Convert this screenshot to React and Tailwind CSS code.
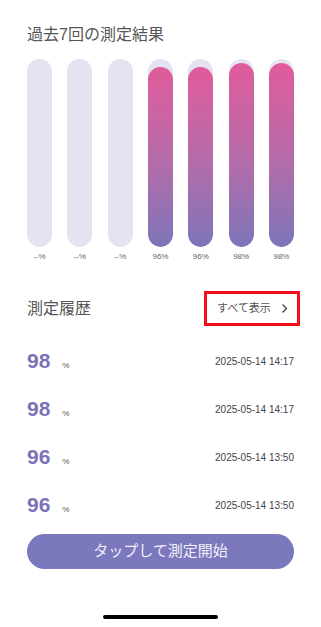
import React from 'react';

const FONT = { fontFamily: '"Liberation Sans", "Noto Sans CJK JP", sans-serif' };

// last 7 results, null = no data
const results = [null, null, null, 96, 96, 98, 98];

const history = [
  { value: 98, date: '2025-05-14 14:17' },
  { value: 98, date: '2025-05-14 14:17' },
  { value: 96, date: '2025-05-14 13:50' },
  { value: 96, date: '2025-05-14 13:50' },
];

export default function App() {
  return (
    <div className="w-[321px] h-[627px] bg-white flex flex-col px-[27px] pt-[24px]" style={FONT}>
      <div className="text-[16px] leading-[22px] text-[#555]">過去7回の測定結果</div>

      {/* bar chart */}
      <div className="mt-[13px] flex justify-between">
        {results.map((v, i) => (
          <div key={i} className="w-[25px] flex flex-col items-center">
            <div className="w-[25px] h-[188px] rounded-full bg-[#e5e3f1] flex flex-col justify-end overflow-hidden">
              {v !== null && (
                <div
                  className="w-full rounded-full bg-linear-to-b from-[#e15a9b] via-[#b76ba9] to-[#7c74b8]"
                  style={{ height: `${v}%` }}
                />
              )}
            </div>
            <div className="mt-[5px] text-[8px] leading-[10px] text-[#666] whitespace-nowrap">
              {v === null ? '--%' : `${v}%`}
            </div>
          </div>
        ))}
      </div>

      {/* history header */}
      <div className="mt-[29px] h-[35px] flex items-center justify-between">
        <div className="text-[16px] leading-[22px] text-[#555]">測定履歴</div>
        <div className="-mr-[6px] w-[96px] h-[35px] border-[3px] border-[#f20d1a] flex items-center pl-[10px]">
          <span className="text-[11px] text-[#555]">すべて表示</span>
          <svg className="ml-[11px]" width="6" height="9" viewBox="0 0 6 9" fill="none">
            <path d="M1 1l3.5 3.5L1 8" stroke="#444" strokeWidth="1.4" strokeLinecap="round" strokeLinejoin="round" />
          </svg>
        </div>
      </div>

      {/* history rows */}
      <div className="mt-[11px] flex flex-col">
        {history.map((h, i) => (
          <div key={i} className="h-[48px] flex items-center justify-between">
            <div className="flex items-baseline">
              <span className="text-[21px] font-bold text-[#7a73ba] leading-none">{h.value}</span>
              <span className="ml-[12px] text-[8px] text-[#555]">%</span>
            </div>
            <span className="text-[10px] text-[#444]">{h.date}</span>
          </div>
        ))}
      </div>

      <button className="mt-[5px] h-[35px] w-full rounded-full bg-[#7b78bd] text-[15px] text-[#f1f0fa] flex items-center justify-center">
        タップして測定開始
      </button>

      <div className="mt-[46px] self-center w-[115px] h-[4px] rounded-full bg-black" />
    </div>
  );
}
